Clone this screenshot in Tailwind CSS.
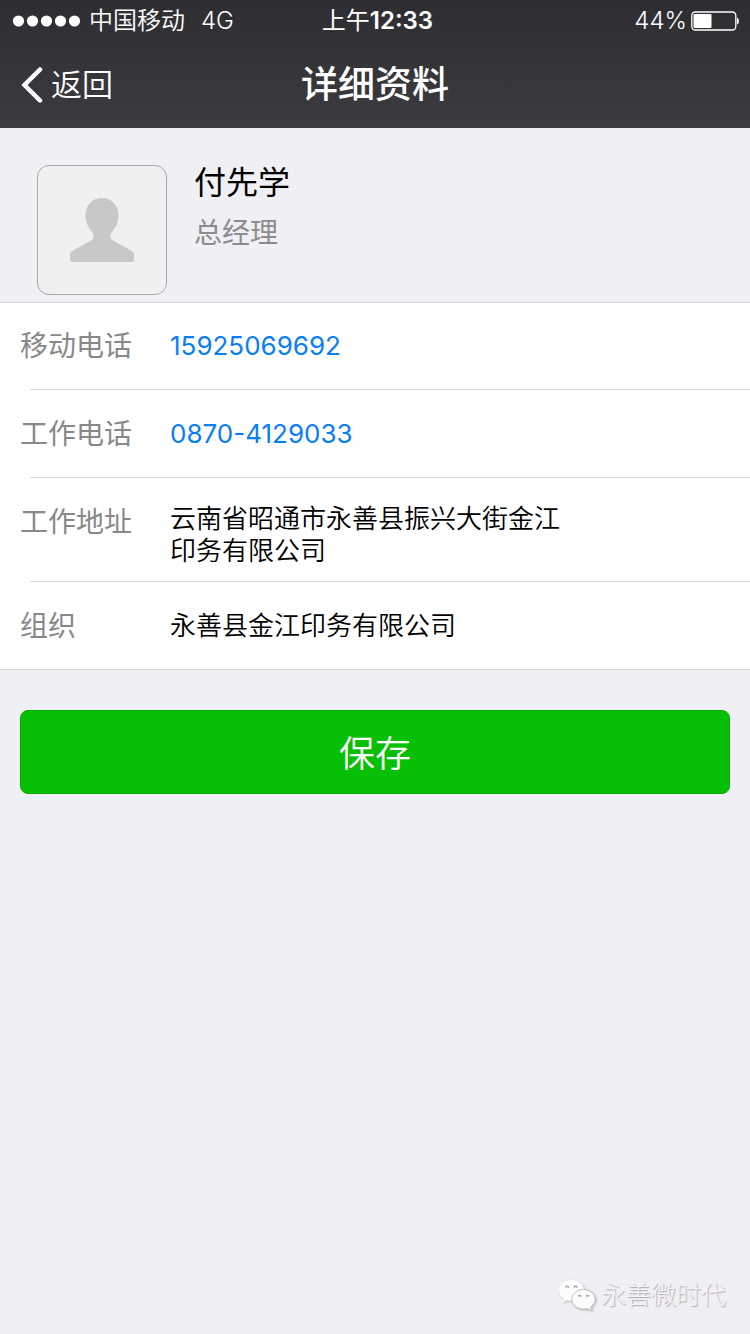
<!DOCTYPE html>
<html lang="zh-CN">
<head>
<meta charset="utf-8">
<meta name="viewport" content="width=device-width, initial-scale=1">
<title>详细资料</title>
<script src="https://cdn.jsdelivr.net/npm/@tailwindcss/browser@4"></script>
</head>
<body class="flex min-h-screen flex-col bg-[#efeff4] font-['Inter','Noto_Sans_CJK_SC',sans-serif] text-black">
<header class="bg-linear-to-b from-[#2e2d32] to-[#3c3b40] text-white">
  <div class="grid h-[42px] grid-cols-[1fr_auto_1fr] items-center pr-[11px] pl-3 text-2xl">
    <div class="flex items-center">
      <svg class="mr-2 h-3 w-[69px]" viewBox="0 0 69 12" fill="currentColor" aria-hidden="true">
        <circle cx="6.500" cy="6" r="5.600"/><circle cx="20.500" cy="6" r="5.600"/><circle cx="34.500" cy="6" r="5.600"/><circle cx="48.500" cy="6" r="5.600"/><circle cx="62.500" cy="6" r="5.600"/>
      </svg>
      <span class="font-[350]">中国移动</span>
      <span class="ml-4 font-[350]">4G</span>
    </div>
    <div class="pl-1"><span>上午</span><span class="font-semibold">12:33</span></div>
    <div class="flex items-center justify-end gap-1">
      <span class="font-[350]">44%</span>
      <svg class="h-5 w-12" viewBox="0 0 48 20" aria-label="电量 44%">
        <rect x="0.800" y="1" width="44" height="18" rx="3.500" fill="none" stroke="#fff" stroke-width="1.300"/>
        <rect x="2.500" y="3" width="18" height="14" rx="1" fill="#fff"/>
        <path d="M46 6.500c2.500 1 2.500 6 0 7z" fill="#fff"/>
      </svg>
    </div>
  </div>
  <nav class="grid h-[86px] grid-cols-[1fr_auto_1fr] items-center px-5">
    <button type="button" class="flex items-center gap-[7px] justify-self-start text-[31px] font-[350]">
      <svg class="h-9 w-6" viewBox="0 0 24 36" fill="none" stroke="currentColor" stroke-width="4.500" aria-hidden="true"><path d="M20 2.500 4.500 18 20 33.500" stroke-linecap="round"/></svg>
      返回
    </button>
    <h1 class="text-[37px] font-medium">详细资料</h1>
  </nav>
</header>
<main>
  <section class="flex gap-[27px] border-b border-[#d9d9dc] px-9 pt-9 pb-[7px]">
    <div class="mt-px ml-px flex size-[130px] items-center justify-center rounded-xl border border-[#a9a9ad] bg-[#f0f0f0]">
      <svg class="size-[66px]" viewBox="0 0 66 66" fill="#c8c8c8" aria-label="头像"><path d="M33 1C23.500 1 16.500 8.500 16.500 18c0 7 3 13 7 17.500 2 2.500 1.500 6-1.500 8L4 53.500C2 54.600 1 56 1 58v5q0 2 2 2h60q2 0 2-2v-5c0-2-1-3.400-3-4.500L44 43.500c-3-2-3.500-5.500-1.500-8 4-4.500 7-10.500 7-17.500C49.500 8.500 42.500 1 33 1Z"/></svg>
    </div>
    <div class="pt-px">
      <h2 class="text-[32px] leading-9">付先学</h2>
      <p class="mt-4 text-[28px] leading-8 text-[#8c8c8c]">总经理</p>
    </div>
  </section>
  <dl class="border-b border-[#d9d9dc] bg-white text-[26px] leading-8">
    <div class="flex px-5 py-[27px]">
      <dt class="w-[150px] shrink-0 text-[28px] text-[#888]">移动电话</dt>
      <dd class="text-[#087ef5]"><a href="tel:15925069692">15925069692</a></dd>
    </div>
    <div class="ml-[30px] border-t border-[#d9d9d9]"></div>
    <div class="flex px-5 pt-7 pb-[27px]">
      <dt class="w-[150px] shrink-0 text-[28px] text-[#888]">工作电话</dt>
      <dd class="text-[#087ef5]"><a href="tel:0870-4129033">0870-4129033</a></dd>
    </div>
    <div class="ml-[30px] border-t border-[#d9d9d9]"></div>
    <div class="flex px-5 pt-[25px] pb-[14px]">
      <dt class="mt-[3px] w-[150px] shrink-0 text-[28px] text-[#888]">工作地址</dt>
      <dd class="max-w-[400px] font-[350]">云南省昭通市永善县振兴大街金江印务有限公司</dd>
    </div>
    <div class="ml-[30px] border-t border-[#d9d9d9]"></div>
    <div class="flex px-5 pt-7 pb-[27px]">
      <dt class="w-[150px] shrink-0 text-[28px] text-[#888]">组织</dt>
      <dd class="font-[350]">永善县金江印务有限公司</dd>
    </div>
  </dl>
  <div class="px-5 pt-10">
    <button type="button" class="h-21 w-full rounded-lg border border-[#08a808] bg-[#07bf05] pt-[3px] text-4xl font-[350] text-white">保存</button>
  </div>
</main>
<footer class="mt-auto flex items-center justify-end gap-1 px-6 pb-[21px] text-[25px] leading-9 font-light text-[#f4f4f8] [text-shadow:1px_1px_1px_#a8a8ac]">
  <svg class="h-9 w-10 drop-shadow-[1px_1px_1px_#b4b4b8]" viewBox="0 0 40 36" aria-hidden="true">
    <path d="M14.500 3C7.500 3 2 7.600 2 13.400c0 3.300 1.800 6.200 4.600 8.100L5.200 25.500l4.600-2.300c1.500.4 3 .6 4.700.6C21.500 23.800 27 19.200 27 13.400S21.500 3 14.500 3Z" fill="#fcfcfd"/>
    <path d="M26.500 12.500C20 12.500 14.800 16.900 14.800 22.200S20 32 26.500 32c1.400 0 2.800-.2 4.100-.6l4.200 2.200-1.200-3.800c2.800-1.800 4.500-4.500 4.500-7.600 0-5.300-5.200-9.700-11.600-9.700Z" fill="#fcfcfd" stroke="#c4c4c9" stroke-width="1"/>
    <g fill="none" stroke="#a4a4a9" stroke-width="1.500"><path d="M8.500 10.500q1.700-2.300 3.400 0M17 10.500q1.700-2.300 3.400 0M21.200 19.500q1.500-2 3 0M29 19.500q1.500-2 3 0"/></g>
  </svg>
  <span>永善微时代</span>
</footer>
</body>
</html>
